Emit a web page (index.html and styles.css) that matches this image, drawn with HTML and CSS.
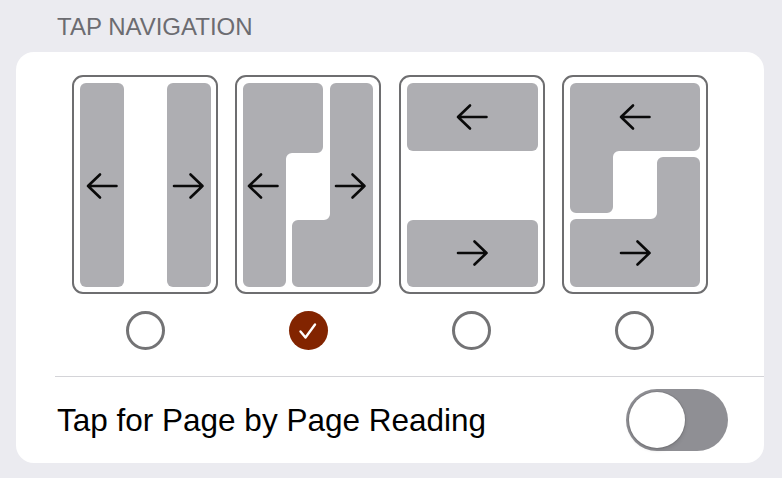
FILE: index.html
```html
<!DOCTYPE html>
<html>
<head>
<meta charset="utf-8">
<link rel="stylesheet" href="styles.css">
</head>
<body>
<div class="page">
  <div class="section-title">TAP NAVIGATION</div>
  <div class="card">
    <div class="options">
      <div class="option">
        <svg class="frame" width="146" height="219" viewBox="0 0 146 219">
          <rect class="outline" x="1" y="1" width="144" height="217" rx="10"/>
          <rect class="zone" x="8" y="8" width="44" height="204" rx="6"/>
          <rect class="zone" x="95" y="8" width="44" height="204" rx="6"/>
          <path class="arrow" d="M44.5 111H16M28 99.5L16 111L28 122.5"/>
          <path class="arrow" d="M102 111H130.5M118.5 99.5L130.5 111L118.5 122.5"/>
        </svg>
        <div class="radio"></div>
      </div>
      <div class="option">
        <svg class="frame" width="146" height="219" viewBox="0 0 146 219">
          <rect class="outline" x="1" y="1" width="144" height="217" rx="10"/>
          <path class="zone" d="M14 8H82A6 6 0 0 1 88 14V72A6 6 0 0 1 82 78H57A6 6 0 0 0 51 84V206A6 6 0 0 1 45 212H14A6 6 0 0 1 8 206V14A6 6 0 0 1 14 8Z"/>
          <path class="zone" d="M101 8H132A6 6 0 0 1 138 14V206A6 6 0 0 1 132 212H63A6 6 0 0 1 57 206V151A6 6 0 0 1 63 145H89A6 6 0 0 0 95 139V14A6 6 0 0 1 101 8Z"/>
          <path class="arrow" d="M42.5 111H14M26 99.5L14 111L26 122.5"/>
          <path class="arrow" d="M101 111H129.5M117.5 99.5L129.5 111L117.5 122.5"/>
        </svg>
        <div class="radio checked">
          <svg width="20" height="18" viewBox="0 0 20 18"><path d="M2.5 9.5L7.5 15.5L17 2.5" fill="none" stroke="#fff" stroke-width="2.4" stroke-linecap="round" stroke-linejoin="round"/></svg>
        </div>
      </div>
      <div class="option">
        <svg class="frame" width="146" height="219" viewBox="0 0 146 219">
          <rect class="outline" x="1" y="1" width="144" height="217" rx="10"/>
          <rect class="zone" x="8" y="8" width="131" height="68" rx="6"/>
          <rect class="zone" x="8" y="145" width="131" height="67" rx="6"/>
          <path class="arrow" d="M87.5 42H59M71 30.5L59 42L71 53.5"/>
          <path class="arrow" d="M59 178H87.5M75.5 166.5L87.5 178L75.5 189.5"/>
        </svg>
        <div class="radio"></div>
      </div>
      <div class="option">
        <svg class="frame" width="146" height="219" viewBox="0 0 146 219">
          <rect class="outline" x="1" y="1" width="144" height="217" rx="10"/>
          <path class="zone" d="M14 8H132A6 6 0 0 1 138 14V70A6 6 0 0 1 132 76H57A6 6 0 0 0 51 82V132A6 6 0 0 1 45 138H14A6 6 0 0 1 8 132V14A6 6 0 0 1 14 8Z"/>
          <path class="zone" d="M101 82H132A6 6 0 0 1 138 88V206A6 6 0 0 1 132 212H14A6 6 0 0 1 8 206V150A6 6 0 0 1 14 144H89A6 6 0 0 0 95 138V88A6 6 0 0 1 101 82Z"/>
          <path class="arrow" d="M87.5 42H59M71 30.5L59 42L71 53.5"/>
          <path class="arrow" d="M59 178H87.5M75.5 166.5L87.5 178L75.5 189.5"/>
        </svg>
        <div class="radio"></div>
      </div>
    </div>
    <div class="divider"></div>
    <div class="row">
      <span class="row-label">Tap for Page by Page Reading</span>
      <div class="toggle"><div class="knob"></div></div>
    </div>
  </div>
</div>
</body>
</html>
```

FILE: styles.css
```css
html, body {
  margin: 0;
  padding: 0;
}
body {
  background: #ebebf0;
  font-family: "Liberation Sans", Arial, sans-serif;
  width: 782px;
  height: 478px;
  overflow: hidden;
}
.page {
  display: flex;
  flex-direction: column;
}
.section-title {
  padding: 13px 0 0 57px;
  height: 28px;
  line-height: 28px;
  font-size: 24px;
  color: #6c6c71;
}
.card {
  margin: 11px 0 0 16px;
  width: 748px;
  height: 411px;
  background: #fff;
  border-radius: 18px;
  display: flex;
  flex-direction: column;
  box-sizing: border-box;
  padding-top: 23px;
}
.options {
  display: flex;
  gap: 17.3px;
  padding-left: 56px;
}
.option {
  width: 146px;
  display: flex;
  flex-direction: column;
  align-items: center;
  gap: 16.5px;
}
.frame {
  display: block;
}
.outline {
  fill: #fff;
  stroke: #6e6e70;
  stroke-width: 2;
}
.zone {
  fill: #aeaeb2;
}
.arrow {
  fill: none;
  stroke: #0a0a0a;
  stroke-width: 2.6;
  stroke-linecap: round;
  stroke-linejoin: round;
}
.radio {
  width: 39px;
  height: 39px;
  box-sizing: border-box;
  border-radius: 50%;
  border: 3px solid #737375;
  background: #fff;
  display: flex;
  align-items: center;
  justify-content: center;
}
.radio.checked {
  border: none;
  background: #822400;
}
.radio.checked svg {
  display: block;
  margin-top: 1px;
}
.divider {
  margin: 26.5px 0 0 39px;
  height: 1px;
  background: #d4d4d8;
}
.row {
  height: 86px;
  display: flex;
  align-items: center;
  justify-content: space-between;
  padding: 0 36px 0 41px;
}
.row-label {
  font-size: 31.5px;
  color: #000;
}
.toggle {
  width: 102px;
  height: 62px;
  border-radius: 31px;
  background: #8f8f94;
  display: flex;
  align-items: center;
  padding-left: 3px;
  box-sizing: border-box;
}
.knob {
  width: 56px;
  height: 56px;
  border-radius: 50%;
  background: #fff;
  box-shadow: 0 0 0 1px rgba(0,0,0,0.08), 0 2px 4px rgba(0,0,0,0.15);
}
```
